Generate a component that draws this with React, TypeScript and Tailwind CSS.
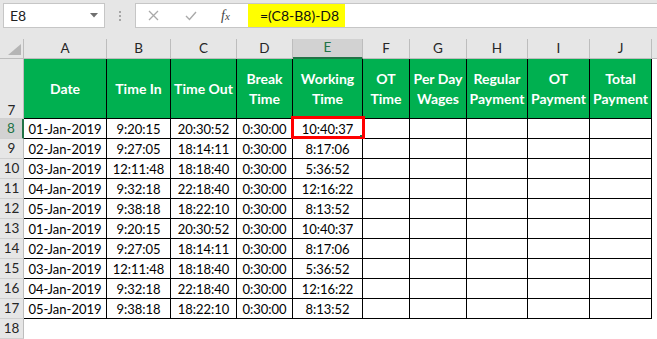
import React from "react";

const COLS =
  "grid grid-cols-[24px_83px_64px_66px_56px_70px_47px_57px_61px_62px_62px_1fr]";

const letters = ["A", "B", "C", "D", "E", "F", "G", "H", "I", "J"];

const headers: string[][] = [
  ["Date"],
  ["Time In"],
  ["Time Out"],
  ["Break", "Time"],
  ["Working", "Time"],
  ["OT", "Time"],
  ["Per Day", "Wages"],
  ["Regular", "Payment"],
  ["OT", "Payment"],
  ["Total", "Payment"],
];

const base: string[][] = [
  ["01-Jan-2019", "9:20:15", "20:30:52", "0:30:00", "10:40:37"],
  ["02-Jan-2019", "9:27:05", "18:14:11", "0:30:00", "8:17:06"],
  ["03-Jan-2019", "12:11:48", "18:18:40", "0:30:00", "5:36:52"],
  ["04-Jan-2019", "9:32:18", "22:18:40", "0:30:00", "12:16:22"],
  ["05-Jan-2019", "9:38:18", "18:22:10", "0:30:00", "8:13:52"],
];
const data = [...base, ...base];

function RowHead({ n, selected, bottom }: { n: number; selected?: boolean; bottom?: boolean }) {
  return (
    <div
      className={
        "flex justify-center border-b border-[#d0d0d0] text-[13.5px] " +
        (bottom ? "items-end pb-[1px] " : "items-center ") +
        (selected
          ? "bg-[#d2d2d2] text-[#217346] border-r-2 border-r-[#217346]"
          : "bg-[#e6e6e6] text-[#262626] border-r border-r-[#bdbdbd]")
      }
    >
      {n}
    </div>
  );
}

export default function App() {
  return (
    <div className="w-[657px] h-[339px] overflow-hidden bg-white font-['Lato',sans-serif] text-[13px] leading-none text-black">
      {/* formula bar */}
      <div className="flex h-[39px] items-start bg-[#e6e6e6] pl-[3px] pt-[3px]">
        <div className="flex h-[25px] w-[102px] items-center justify-between border border-[#c6c6c6] bg-white pl-[6px] pr-[6px] text-[14px] text-[#222]">
          <span>E8</span>
          <svg width="8" height="5" viewBox="0 0 8 5">
            <path d="M0 0 L8 0 L4 4.5 Z" fill="#6f6f6f" />
          </svg>
        </div>
        <div className="flex h-[25px] w-[30px] flex-col items-center justify-center gap-[2px]">
          <div className="h-[2px] w-[2px] bg-[#a6a6a6]" />
          <div className="h-[2px] w-[2px] bg-[#a6a6a6]" />
          <div className="h-[2px] w-[2px] bg-[#a6a6a6]" />
        </div>
        <div className="flex h-[25px] flex-1 border border-r-0 border-[#c6c6c6] bg-white">
          <div className="flex w-[112px] items-center">
            <svg className="ml-[12px]" width="11" height="11" viewBox="0 0 11 11">
              <path d="M1 1 L10 10 M10 1 L1 10" stroke="#a9a9a9" strokeWidth="1.3" />
            </svg>
            <svg className="ml-[26px]" width="12" height="10" viewBox="0 0 12 10">
              <path d="M1 5 L4.5 8.5 L11 1" stroke="#a9a9a9" strokeWidth="1.4" fill="none" />
            </svg>
            <span className="ml-[24px] font-['Liberation_Serif',serif] text-[14px] italic text-[#444]">
              f<span className="text-[11px]">x</span>
            </span>
          </div>
          <div className="flex w-[97px] items-center bg-[#ffff00] pl-[12px] text-[14px] text-[#111]">
            =(C8-B8)-D8
          </div>
          <div className="flex-1" />
        </div>
      </div>

      {/* column letters */}
      <div className={COLS + " h-[20px] bg-[#e6e6e6] text-[13.5px] text-[#262626]"}>
        <div className="relative border-r border-b border-[#bdbdbd]">
          <svg className="absolute left-[8px] top-[5px]" width="13" height="11" viewBox="0 0 13 11">
            <path d="M13 0 L13 11 L0 11 Z" fill="#b5b5b5" />
          </svg>
        </div>
        {letters.map((l) => (
          <div
            key={l}
            className={
              "flex items-center justify-center border-r border-[#bdbdbd] " +
              (l === "E"
                ? "bg-[#d2d2d2] text-[#217346] border-b-2 border-b-[#217346]"
                : "border-b border-b-[#bdbdbd]")
            }
          >
            {l}
          </div>
        ))}
        <div className="border-b border-[#bdbdbd]" />
      </div>

      {/* header row 7 */}
      <div className={COLS + " h-[60px]"}>
        <RowHead n={7} bottom />
        {headers.map((h, i) => (
          <div
            key={i}
            className="flex flex-col items-center justify-center border-r border-b border-black bg-[#00b050] text-[14px] font-bold leading-[20px] text-white"
          >
            {h.map((t) => (
              <span key={t} className="whitespace-nowrap">
                {t}
              </span>
            ))}
          </div>
        ))}
        <div />
      </div>

      {/* data rows */}
      {data.map((r, ri) => (
        <div key={ri} className={COLS + " h-[20px]"}>
          <RowHead n={8 + ri} selected={ri === 0} />
          {r.map((v, ci) => (
            <div
              key={ci}
              className="relative flex items-center justify-center border-r border-b border-black pt-[2px]"
            >
              {v}
              {ri === 0 && ci === 4 && (
                <>
                  <div className="absolute -left-[2px] -right-[3px] -top-[3px] -bottom-px z-10 border-[3px] border-[#ff0000]" />
                  <div className="absolute right-0 bottom-[1px] z-20 h-[2px] w-[2px] bg-[#217346]" />
                </>
              )}
            </div>
          ))}
          {[0, 1, 2, 3, 4].map((k) => (
            <div key={"e" + k} className="border-r border-b border-black" />
          ))}
          <div />
        </div>
      ))}

      {/* row 18 */}
      <div className={COLS + " h-[20px]"}>
        <RowHead n={18} />
      </div>
    </div>
  );
}
